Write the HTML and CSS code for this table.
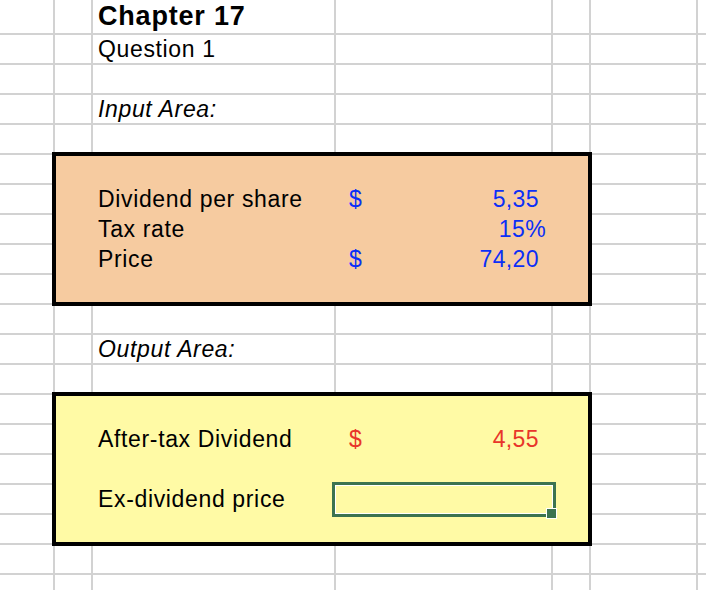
FILE: index.html
```html
<!DOCTYPE html>
<html>
<head>
<meta charset="utf-8">
<link rel="stylesheet" href="styles.css">
</head>
<body>
<div class="sheet">
  <div class="cells" id="cells"></div>
</div>
<div class="sheet grid">
  <div class="c r1 title">Chapter 17</div>
  <div class="c r2 label">Question 1</div>
  <div class="c r4 label it">Input Area:</div>

  <div class="box orange"></div>
  <div class="c r7 label">Dividend per share</div>
  <div class="c r7 val blue"><span>$</span><span>5,35</span></div>
  <div class="c r8 label">Tax rate</div>
  <div class="c r8 val blue pct"><span></span><span>15%</span></div>
  <div class="c r9 label">Price</div>
  <div class="c r9 val blue"><span>$</span><span>74,20</span></div>

  <div class="c r12 label it">Output Area:</div>

  <div class="box yellow"></div>
  <div class="c r15 label">After-tax Dividend</div>
  <div class="c r15 val red"><span>$</span><span>4,55</span></div>
  <div class="c r17 label">Ex-dividend price</div>
  <div class="sel"><i class="handle"></i></div>
</div>
<script src="cells.js"></script>
</body>
</html>
```

FILE: cells.js
```js
var el = document.getElementById('cells');
var html = '';
for (var i = 0; i < 20 * 7; i++) html += '<div></div>';
el.innerHTML = html;
```

FILE: styles.css
```css
html, body {
  margin: 0;
  padding: 0;
  background: #ffffff;
  overflow: hidden;
  width: 706px;
  height: 590px;
}
body {
  position: relative;
  font-family: "Liberation Sans", Arial, sans-serif;
  color: #000;
}
.sheet {
  position: absolute;
  left: 0;
  top: 0;
  width: 706px;
  height: 590px;
  overflow: hidden;
}
.cells {
  display: grid;
  grid-template-columns: 53px 36px 241px 215px 36px 105px 1fr;
  grid-template-rows: 33px repeat(19, 28px);
  gap: 2px;
  background: #d2d2d2;
  width: 706px;
}
.cells div {
  background: #fff;
}
.grid {
  display: grid;
  grid-template-columns: 53px 36px 241px 215px 36px 105px 1fr;
  grid-template-rows: 33px repeat(19, 28px);
  gap: 2px;
}
.c {
  grid-column: 3;
  white-space: nowrap;
  font-size: 23px;
  letter-spacing: 0.65px;
  line-height: 28px;
  height: 28px;
  padding-left: 5px;
  display: flex;
  align-items: flex-end;
}
.r1 { grid-row: 1; height: 33px; }
.r2 { grid-row: 2; }
.r4 { grid-row: 4; }
.r7 { grid-row: 7; }
.r8 { grid-row: 8; }
.r9 { grid-row: 9; }
.r12 { grid-row: 12; }
.r15 { grid-row: 15; }
.r17 { grid-row: 17; }

.title {
  font-weight: bold;
  font-size: 27px;
  letter-spacing: 0.8px;
  line-height: 34px;
}
.it { font-style: italic; }

.val {
  grid-column: 4;
  justify-content: space-between;
  letter-spacing: 0.4px;
  padding: 0 12px 0 13px;
}
.val.pct { padding-right: 5px; }
.blue { color: #0b2ff7; }
.red { color: #e8352a; }

.box {
  grid-column: 2 / 6;
  margin: -3px;
  border: 4px solid #000;
}
.orange {
  grid-row: 6 / 11;
  background: #f6cba0;
}
.yellow {
  grid-row: 14 / 19;
  background: #fffaa5;
}
.sel {
  grid-column: 4;
  grid-row: 17;
  margin: -3px -5px -4px -4px;
  border: 3px solid #3c7350;
  box-shadow: inset 0 0 0 1px #fff;
  position: relative;
}
.handle {
  position: absolute;
  right: -4px;
  bottom: -5px;
  width: 9px;
  height: 9px;
  background: #3c7350;
  border: 1px solid #fff;
}
```
